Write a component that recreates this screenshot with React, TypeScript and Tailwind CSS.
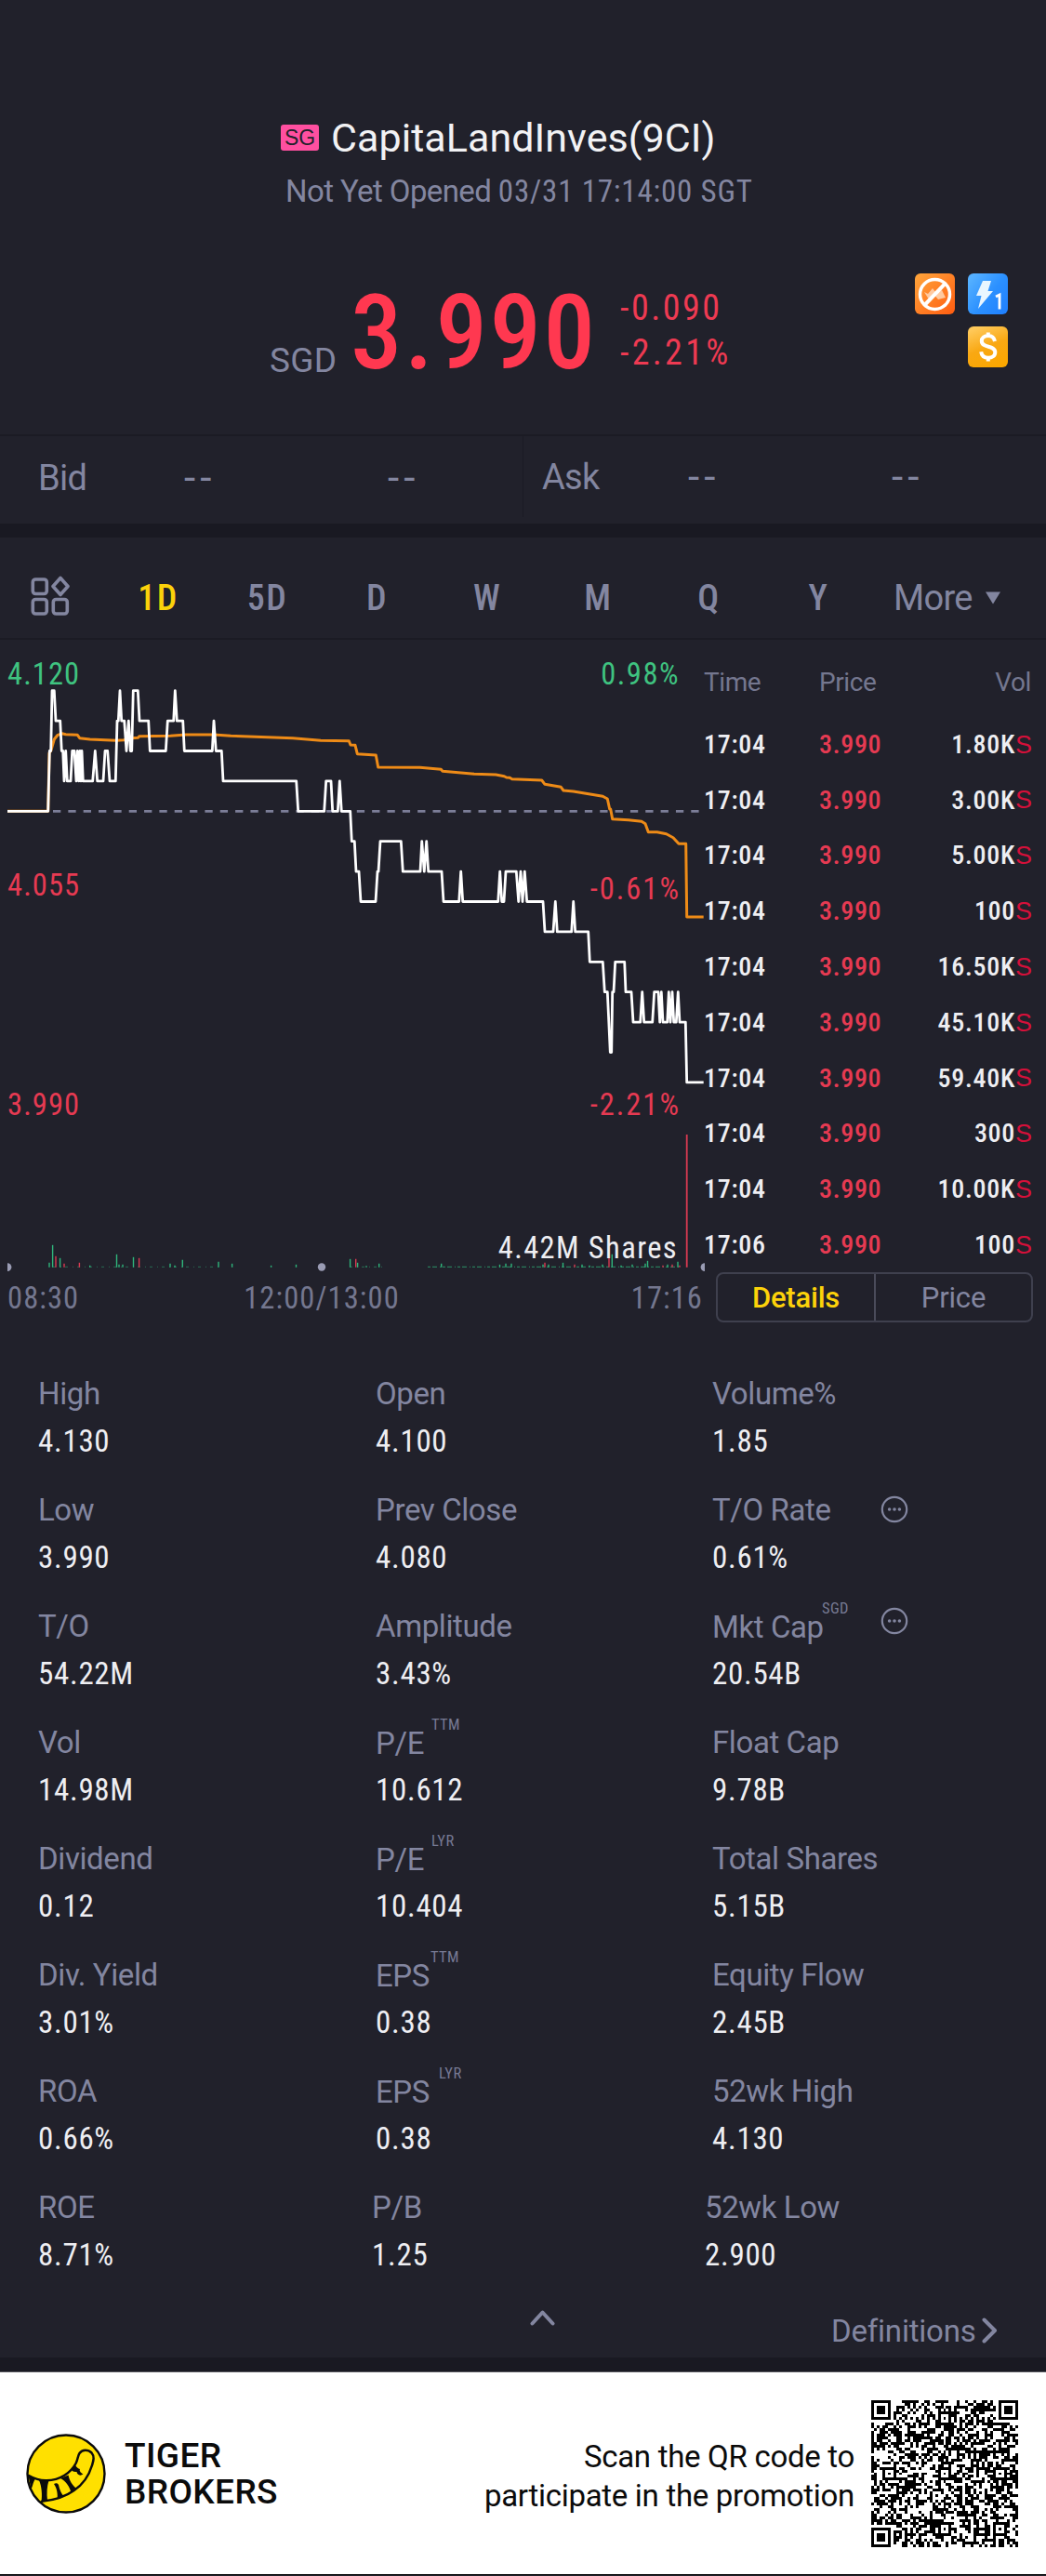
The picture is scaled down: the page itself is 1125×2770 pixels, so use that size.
import React from "react";

const LEVEL_TOP = 742.7 - 688;
const LEVEL_STEP = 32.4;

// Price path: [x in thirds of a pixel, tick level below the day's top]
const PRICE: [number, number][] = [
  [24, 4], [155, 4], [160, 2], [164, 2], [168, 0], [175, 0], [180, 1], [194, 1], [199, 2], [203, 2], [207, 3], [212, 2],
  [217, 3], [228, 3], [233, 2], [240, 2], [246, 3], [250, 2], [254, 3], [258, 2], [261, 3], [264, 2], [268, 3], [299, 3],
  [307, 2], [314, 3], [333, 3], [339, 2], [347, 2], [354, 3], [373, 3], [378, 1], [382, 1], [387, 0], [392, 1], [401, 1],
  [408, 2], [415, 1], [421, 2], [425, 2], [430, 0], [445, 0], [450, 1], [479, 1], [484, 2], [535, 2], [541, 1], [560, 1],
  [565, 0], [571, 1], [590, 1], [595, 2], [685, 2], [690, 1], [697, 2], [715, 2], [720, 3], [956, 3], [962, 4], [1046, 4],
  [1052, 3], [1068, 3], [1073, 4], [1090, 4], [1096, 3], [1102, 4], [1130, 4], [1135, 5], [1144, 5], [1149, 6], [1158, 6],
  [1164, 7], [1212, 7], [1218, 6], [1221, 6], [1227, 5], [1294, 5], [1300, 6], [1356, 6], [1361, 5], [1369, 6], [1376, 5],
  [1382, 6], [1425, 6], [1431, 7], [1481, 7], [1487, 6], [1493, 7], [1607, 7], [1613, 6], [1619, 7], [1626, 7], [1632, 6],
  [1666, 6], [1673, 7], [1680, 6], [1686, 7], [1693, 6], [1700, 7], [1752, 7], [1758, 8], [1785, 8], [1792, 7], [1798, 8],
  [1844, 8], [1850, 7], [1856, 8], [1898, 8], [1903, 9], [1945, 9], [1951, 10], [1960, 10], [1969, 12], [1973, 12], [1976, 10],
  [1980, 10], [1985, 9], [2015, 9], [2019, 10], [2037, 10], [2043, 11], [2066, 11], [2072, 10], [2078, 11], [2105, 11],
  [2111, 10], [2124, 10], [2129, 11], [2134, 10], [2139, 11], [2153, 11], [2158, 10], [2163, 11], [2169, 10], [2174, 11],
  [2182, 11], [2188, 10], [2193, 11], [2212, 11], [2216, 13], [2270, 13],
];

// Average price path in thirds of a pixel, y measured from two pixels below the chart's top
const AVERAGE: [number, number][] = [
  [24, 547], [155, 547], [159, 360], [165, 350], [175, 315], [185, 302], [200, 296], [212, 299], [250, 301], [257, 311], [290, 315],
  [375, 319], [400, 317], [425, 311], [445, 310], [450, 305], [550, 304], [600, 300], [690, 300], [745, 304], [945, 311],
  [1035, 319], [1126, 320], [1131, 333], [1146, 334], [1153, 362], [1213, 366], [1220, 405], [1355, 406], [1423, 412],
  [1428, 418], [1530, 427], [1600, 429], [1627, 434], [1634, 438], [1645, 439], [1652, 443], [1748, 447], [1758, 460],
  [1810, 469], [1818, 480], [1850, 483], [1945, 499], [1960, 507], [1967, 540], [1970, 540], [1976, 572], [2028, 575],
  [2070, 580], [2082, 587], [2092, 614], [2120, 614], [2150, 620], [2172, 632], [2190, 652], [2213, 652], [2216, 888],
  [2270, 888],
];

const G = "#2fb67c";
const R = "#d93a52";
const VOLUME: [number, number, string][] = [
  [53, 5, G], [56.6, 24, G], [60, 12, R], [64.6, 10, G], [69, 4, R], [85.4, 5, R], [96.7, 2, G], [125.5, 14, G], [128, 3, G],
  [132, 3, G], [143.5, 11, G], [149.6, 10, R], [183, 4, G], [188, 2, G], [196.3, 8, G], [235, 6, G], [249.6, 4, G],
  [291.6, 2, G], [318.5, 3, G], [376.6, 9, G], [382.7, 9, R], [384.6, 5, G], [394, 1.5, G], [407.7, 4, G], [474.7, 4, G],
  [537.5, 3, G], [544, 4, G], [550, 4, G], [584, 3, G], [586, 5, R], [590, 3, G], [605.5, 5, G], [618, 3, R], [626, 3, G],
  [634, 2, G], [648, 3, G], [655, 11, R], [658.3, 14, G], [668, 2, G], [680, 3, G], [694, 4, G], [696.5, 7, G],
  [713, 2, R], [718, 3, G], [723, 3, R], [729, 6, G], [731, 2, R],
];

const line = (pts: [number, number][], y: (v: number) => number) =>
  pts.map(([px, py], i) => `${i ? "L" : "M"}${(px / 3).toFixed(1)} ${y(py).toFixed(1)}`).join("");

function Chart() {
  return (
    <svg className="absolute left-0 top-0" width="758" height="690" viewBox="0 0 758 690" fill="none">
      <path d="M57 184.300H752" stroke="#7c7e98" strokeWidth="2.800" strokeDasharray="8.300 8.040" />
      <path d={line(AVERAGE, (v) => 2 + v / 3)} stroke="#ee8b17" strokeWidth="3" strokeLinejoin="round" />
      <path d={line(PRICE, (v) => LEVEL_TOP + LEVEL_STEP * v)} stroke="#fff" strokeWidth="2.800" strokeLinejoin="round" />
      <path d="M57 674.300H235M376 674.300H412" stroke={G} strokeWidth="1" strokeDasharray="3 5 1 4" opacity=".5" />
      <path d="M460 674.300H732" stroke={G} strokeWidth="1.200" strokeDasharray="3 2 5 3 1 2" opacity=".6" />
      {VOLUME.map(([x, h, c]) => (
        <path key={x} d={`M${x} 674.800V${674.8 - h}`} stroke={c} strokeWidth="1.400" />
      ))}
      <path d="M738.700 674.800V532" stroke={R} strokeWidth="1.800" />
      <path d="M8 670.200a4.400 4.400 0 0 1 0 8.800z" fill="#9a9cb4" />
      <circle cx="346" cy="674.500" r="4.200" fill="#9a9cb4" />
      <path d="M758 670.200a4.400 4.400 0 0 0 0 8.800z" fill="#9a9cb4" />
    </svg>
  );
}

const TRADES: [string, string][] = [
  ["17:04", "1.80K"], ["17:04", "3.00K"], ["17:04", "5.00K"], ["17:04", "100"], ["17:04", "16.50K"],
  ["17:04", "45.10K"], ["17:04", "59.40K"], ["17:04", "300"], ["17:04", "10.00K"], ["17:06", "100"],
];

type Stat = { label: string; value: string; sup?: string; supClass?: string; more?: string };
const STATS: Stat[][] = [
  [{ label: "High", value: "4.130" }, { label: "Open", value: "4.100" }, { label: "Volume%", value: "1.85" }],
  [{ label: "Low", value: "3.990" }, { label: "Prev Close", value: "4.080" }, { label: "T/O Rate", value: "0.61%", more: "top-[9px]" }],
  [
    { label: "T/O", value: "54.22M" },
    { label: "Amplitude", value: "3.43%" },
    { label: "Mkt Cap", value: "20.54B", sup: "SGD", supClass: "left-[118px]", more: "top-[4px]" },
  ],
  [{ label: "Vol", value: "14.98M" }, { label: "P/E", value: "10.612", sup: "TTM", supClass: "left-[60px]" }, { label: "Float Cap", value: "9.78B" }],
  [{ label: "Dividend", value: "0.12" }, { label: "P/E", value: "10.404", sup: "LYR", supClass: "left-[60px]" }, { label: "Total Shares", value: "5.15B" }],
  [{ label: "Div. Yield", value: "3.01%" }, { label: "EPS", value: "0.38", sup: "TTM", supClass: "left-[59px]" }, { label: "Equity Flow", value: "2.45B" }],
  [{ label: "ROA", value: "0.66%" }, { label: "EPS", value: "0.38", sup: "LYR", supClass: "left-[68px]" }, { label: "52wk High", value: "4.130" }],
  [{ label: "ROE", value: "8.71%" }, { label: "P/B", value: "1.25" }, { label: "52wk Low", value: "2.900" }],
];

function StatCell({ s }: { s: Stat }) {
  return (
    <div className="relative text-[33px]">
      <div className={`leading-[50px] tracking-[-0.4px] text-[#8386a0] [font-stretch:100%] ${s.sup ? "-mb-px pt-px" : ""}`}>{s.label}</div>
      <div className="leading-[51px] tracking-[0.7px] text-[#eeeef2]">{s.value}</div>
      {s.sup && <span className={`absolute top-[-4px] text-[16.5px] leading-[20px] tracking-[0.4px] text-[#777a94] ${s.supClass}`}>{s.sup}</span>}
      {s.more && (
        <svg className={`absolute left-[181px] ${s.more}`} width="30" height="30" viewBox="0 0 30 30" fill="#8386a0">
          <circle cx="15" cy="15" r="13.2" fill="none" stroke="#8386a0" strokeWidth="2.2" />
          <circle cx="9.6" cy="15" r="1.8" />
          <circle cx="15" cy="15" r="1.8" />
          <circle cx="20.4" cy="15" r="1.8" />
        </svg>
      )}
    </div>
  );
}

const QR_SIZE = 53;

function isDark(r: number, c: number): boolean {
  const finder = (r0: number, c0: number) => {
    const d = Math.max(Math.abs(r - r0 - 3), Math.abs(c - c0 - 3));
    return d > 4 ? null : d === 3 || d <= 1;
  };
  for (const [r0, c0] of [[0, 0], [0, 46], [46, 0]]) {
    const f = finder(r0, c0);
    if (f !== null) return f;
  }
  for (const ar of [6, 26, 46])
    for (const ac of [6, 26, 46]) {
      const d = Math.max(Math.abs(r - ar), Math.abs(c - ac));
      if (d <= 2 && ar + ac !== 12 && !(ar === 6 && ac === 46) && !(ar === 46 && ac === 6)) return d !== 1;
    }
  if (r === 6 || c === 6) return (r + c) % 2 === 0;
  let h = (r * 374761393 + c * 668265263) | 0;
  h = Math.imul(h ^ (h >>> 13), 1274126177);
  h = Math.imul(h ^ (h >>> 15), 2246822519);
  return ((h >>> 9) & 255) < 130;
}

function QrCode() {
  let d = "";
  for (let r = 0; r < QR_SIZE; r++) for (let c = 0; c < QR_SIZE; c++) if (isDark(r, c)) d += `M${c} ${r}h1v1h-1z`;
  return (
    <svg width="158" height="158" viewBox="0 0 53 53" shapeRendering="crispEdges">
      <path d={d} fill="#000" />
    </svg>
  );
}

function TigerLogo() {
  return (
    <svg width="86" height="86" viewBox="0 0 86 86" fill="none" stroke="#0b0b0b" strokeLinejoin="round" strokeLinecap="round">
      <circle cx="43" cy="43" r="41.5" fill="#ffe000" strokeWidth="2.4" />
      <path d="M3 45C9 48.5 15 50.5 22 50.3C37 50 48 42 53.5 32C56 27 55.5 24 57.5 21C60.5 16.500 67 17 70.500 20.500C74 24.500 72.500 29 71 34C68 44 62 54 51.600 61C42 68 30 71.500 17 72.700" strokeWidth="2.500" />
      <g fill="#0b0b0b" stroke="none">
        <path d="M2.500 45L10 48.500C8 51 7.500 55 5.500 60Z" />
        <path d="M14 50L24.500 50.300C22.500 57 22 64 23 72L16.500 73C17.500 66 17 57 14 50Z" />
        <path d="M30 54C32 53 34 53 35 55C36 60 38 65 41 67.500L33.500 70.500C34.500 65 33 58 30 54Z" />
        <path d="M37 48L45.500 44.500C46.500 50 50 56 54.500 59L48.500 63.500C47 57 43 51 37 48Z" />
        <path d="M49 39L53 33.500C54 36 56 37.500 58 38C57 40 59 42 61.500 43.500C58 46 55 44 54.500 41C53 41 50 41 49 39Z" />
      </g>
    </svg>
  );
}

const TABS: [string, string][] = [
  ["1D", "w-[118px] text-[#fcd20a]"], ["5D", "w-[117px]"], ["D", "w-[119px]"], ["W", "w-[118px]"],
  ["M", "w-[121px]"], ["Q", "w-[117px]"], ["Y", "w-[119px]"],
];

function Quote({ side, className }: { side: string; className: string }) {
  return (
    <div className={`flex ${className}`}>
      <span className="w-[157px] tracking-[-0.7px]">{side}</span>
      <span className="w-[219px] text-[44px] tracking-[5px]">--</span>
      <span className="text-[44px] tracking-[5px]">--</span>
    </div>
  );
}

export default function App() {
  return (
    <div className="flex h-[2770px] w-[1125px] flex-col overflow-hidden bg-[#21212b] font-['Roboto',sans-serif] text-[#8386a0] [font-stretch:75%]">
      <header className="h-[467px]">
        <div className="flex h-[175px] items-end pl-[302px]">
          <div className="flex h-[54px] items-center">
            <span className="h-[28px] w-[41px] rounded-[3px] bg-[#ff4fa0] text-center font-['Liberation_Sans',sans-serif] text-[23px] leading-[28px] text-[#21212b]">SG</span>
            <h1 className="ml-[13px] text-[43px] leading-[54px] tracking-[0.05px] text-[#f2f2f4] [font-stretch:100%]">CapitaLandInves(9CI)</h1>
          </div>
        </div>
        <p className="pl-[307px] text-[33px] leading-[61px] tracking-[0.8px]">
          <span className="tracking-[-0.6px] [font-stretch:100%]">Not Yet Opened </span>03/31 17:14:00 SGT
        </p>
        <div className="flex pl-[290px] pt-[58px]">
          <span className="mt-[69px] w-[87px] text-[37px] leading-[50px] tracking-[0.3px] [font-stretch:100%]">SGD</span>
          <span className="mt-[14px] w-[290px] text-[111px] font-medium leading-[101px] tracking-[2.5px] text-[#ff3850]">3.990</span>
          <div className="mt-[13px] flex w-[250px] flex-col text-[38px] leading-[48px] text-[#ee3a52]">
            <span className="tracking-[2.5px]">-0.090</span>
            <span className="tracking-[3.3px]">-2.21%</span>
          </div>
          <div className="ml-auto mr-[41px] grid grid-cols-2 content-start gap-x-[14px] gap-y-[13px]">
            <svg width="43" height="44" viewBox="0 0 43 44">
              <defs><linearGradient id="o" x2="1" y2="1"><stop stopColor="#ffa63c" /><stop offset="1" stopColor="#ff5c10" /></linearGradient></defs>
              <rect width="43" height="44" rx="6" fill="url(#o)" />
              <path d="M10 20l5 8 5-6 5 6 8-2-4-8-6 3-4-5-5 6z" fill="#ffc9a0" />
              <path d="M9.500 35L33.500 10" stroke="#fff" strokeWidth="4" />
              <circle cx="21.500" cy="22.500" r="16" fill="none" stroke="#fff" strokeWidth="3.500" />
            </svg>
            <svg width="43" height="44" viewBox="0 0 43 44">
              <defs><linearGradient id="b" x1="1" y1="1" x2="0" y2="0.200"><stop stopColor="#1f7fff" /><stop offset=".5" stopColor="#2b90ff" /><stop offset="1" stopColor="#55b0ff" /></linearGradient></defs>
              <rect width="43" height="44" rx="6" fill="url(#b)" />
              <path d="M16 8h9l-3.500 11H27L11 38l3.500-14H9z" fill="#e9f6ff" />
              <path d="M30 25l4-2v15.500" fill="none" stroke="#fff" strokeWidth="2.800" />
            </svg>
            <svg className="col-start-2" width="43" height="44" viewBox="0 0 43 44">
              <defs><linearGradient id="y" x1=".3" x2=".7" y2="1"><stop stopColor="#ffc95a" /><stop offset=".5" stopColor="#f9a813" /><stop offset="1" stopColor="#fba700" /></linearGradient></defs>
              <rect width="43" height="44" rx="6" fill="url(#y)" />
              <path d="M29 16c-.8-4-3.500-6-7.200-6-4 0-7 2-7 5.700 0 8 14.500 4 14.500 12 0 4-3.300 6-7.300 6-4.500 0-7.300-2.300-7.800-6.500M21.800 6.500V11M21.800 33v4.500" fill="none" stroke="#fff" strokeWidth="4" />
            </svg>
          </div>
        </div>
      </header>

      <section className="flex h-[96px] border-t-2 border-[#1b1b24] pb-[7px] text-[38px] leading-[90px] [font-stretch:100%]">
        <Quote side="Bid" className="w-[563px] border-r border-[#1b1b24] pl-[41px]" />
        <Quote side="Ask" className="-mt-px pl-[20px]" />
      </section>
      <div className="h-[15px] bg-[#191922]" />

      <nav className="flex h-[110px] items-center border-b-2 border-[#1b1b24] pl-[32px] text-[38px]">
        <svg className="mt-[18px]" width="44" height="44" viewBox="0 0 44 44" fill="none" stroke="#8386a0" strokeWidth="3.600">
          <rect x="3.300" y="4" width="15" height="15.500" rx="3" />
          <path d="M33 2.500L41 11.500L33 20.500L25 11.500Z" strokeLinejoin="round" />
          <rect x="3.300" y="25.500" width="15" height="15.500" rx="3" />
          <rect x="25.300" y="25.500" width="15" height="15.500" rx="3" />
        </svg>
        <div className="ml-[35px] mt-[22px] flex font-medium leading-[50px]">
          {TABS.map(([t, cls]) => (
            <span key={t} className={`text-center tracking-[1.5px] ${cls}`}>{t}</span>
          ))}
        </div>
        <span className="ml-[21px] mt-[22px] w-[86px] leading-[50px] tracking-[-0.7px] [font-stretch:100%]">More</span>
        <svg className="ml-[12px] mt-[21px]" width="18" height="14" viewBox="0 0 18 14"><path d="M1 0.500H17L9 13.500Z" fill="#8386a0" /></svg>
      </nav>

      <section className="flex h-[786px]">
        <div className="relative w-[758px] text-[32.5px] leading-[40px]">
          <Chart />
          <div className="relative flex h-full flex-col pl-[8px] tracking-[1.1px]">
            <div className="mt-[17px] flex justify-between pr-[25px] text-[#3fc380]"><span>4.120</span><span className="tracking-[1.5px]">0.98%</span></div>
            <div className="mt-[187px] flex justify-between pr-[24px] text-[#e63a52]"><span>4.055</span><span className="mt-[4px] tracking-[2px]">-0.61%</span></div>
            <div className="mt-[192px] flex justify-between pr-[24px] text-[#e63a52]"><span>3.990</span><span className="tracking-[2px]">-2.21%</span></div>
            <div className="mt-[114px] self-end pr-[27px] tracking-[1.4px] text-[#eeeef2]">4.42M Shares</div>
            <div className="mt-[14px] flex text-[#74778f]"><span className="w-[200px]">08:30</span><span className="w-[276px] text-center">12:00/13:00</span><span className="flex-1 text-right">17:16</span></div>
          </div>
        </div>
        <div className="flex-1 pl-px pr-[14px]">
          <div className="mt-[25px] flex text-[28px] leading-[42px] tracking-[-0.4px] text-[#74778f] [font-stretch:100%]">
            <span className="w-[124px]">Time</span><span>Price</span><span className="ml-auto mr-[2px]">Vol</span>
          </div>
          <div className="mt-[16px]">
            {TRADES.map(([t, v], i) => (
              <div key={i} className="flex h-[59.8px] items-center text-[28px] font-medium tracking-[0.7px]">
                <span className="w-[124px] text-[#eeeef2]">{t}</span>
                <span className="text-[#e63a52]">3.990</span>
                <span className="ml-auto text-[#eeeef2]">{v}</span>
                <span className="mr-px font-['Liberation_Sans',sans-serif] text-[27px] font-normal tracking-normal text-[#d5103a]">S</span>
              </div>
            ))}
          </div>
          <div className="-mt-px ml-[13px] flex h-[54px] w-[341px] rounded-[8px] border-2 border-[#3f404e] text-center text-[31px] leading-[52px] [font-stretch:100%]">
            <span className="w-[170px] border-r-2 border-[#4a4b5a] font-medium tracking-[-0.2px] text-[#fcd20a]">Details</span>
            <span className="flex-1 tracking-[-0.2px]">Price</span>
          </div>
        </div>
      </section>

      <section className="h-[1061px]">
        {STATS.map((row, i) => (
          <div key={i} className={`grid h-[125px] pl-[41px] ${i === 7 ? "grid-cols-[359px_358px_1fr]" : "grid-cols-[363px_362px_1fr]"}`}>
            {row.map((s) => <StatCell key={s.label + (s.sup ?? "")} s={s} />)}
          </div>
        ))}
        <div className="flex">
          <svg className="ml-[570px] mt-[9px]" width="27" height="18" viewBox="0 0 27 18" fill="none"><path d="M2.500 15.500L13.500 3.500L24.500 15.500" stroke="#8386a0" strokeWidth="4" strokeLinecap="round" strokeLinejoin="round" /></svg>
          <span className="ml-[297px] mt-[8px] w-[158px] text-[33px] leading-[50px] tracking-[-0.2px] [font-stretch:100%]">Definitions</span>
          <svg className="ml-[4px] mt-[18px]" width="18" height="28" viewBox="0 0 18 28" fill="none"><path d="M2.500 2.500L14 14L2.500 25.500" stroke="#8386a0" strokeWidth="4" strokeLinecap="round" strokeLinejoin="round" /></svg>
        </div>
      </section>
      <div className="h-[16px] border-b border-[#55555d] bg-[#191922]" />

      <footer className="flex h-[218px] border-b border-black bg-white pl-[28px] text-[#0b0b0b] [font-stretch:100%]">
        <div className="mt-[66px]"><TigerLogo /></div>
        <div className="ml-[20px] mt-[70px] text-[37px] font-medium leading-[39px] tracking-[0.4px]">TIGER<br />BROKERS</div>
        <div className="ml-auto mt-[70px] text-right text-[33px] leading-[42px] tracking-[-0.3px]">Scan the QR code to<br />participate in the promotion</div>
        <div className="ml-[18px] mr-[30px] mt-[30px]"><QrCode /></div>
      </footer>
    </div>
  );
}
